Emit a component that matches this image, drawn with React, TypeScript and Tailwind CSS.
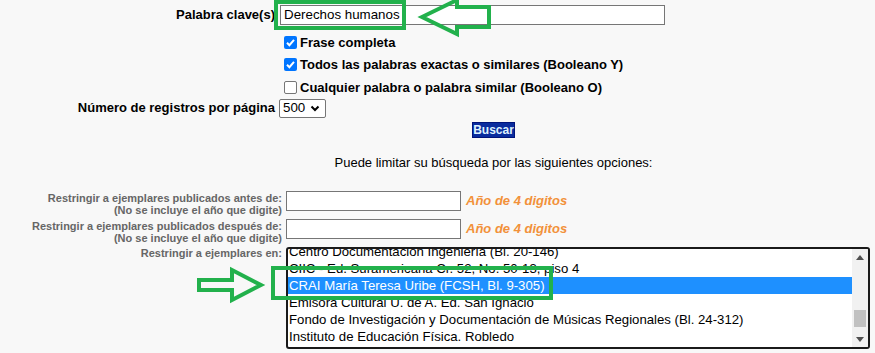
import React from "react";

function Check({ checked }: { checked: boolean }) {
  if (checked) {
    return (
      <span className="ml-[4px] mr-[3px] inline-flex h-[13px] w-[13px] items-center justify-center rounded-[2px] bg-[#0075ff]">
        <svg width="11" height="11" viewBox="0 0 11 11">
          <path d="M2 5.8 L4.4 8.2 L9 2.8" fill="none" stroke="#fff" strokeWidth="2" />
        </svg>
      </span>
    );
  }
  return (
    <span className="ml-[4px] mr-[3px] inline-block h-[13px] w-[13px] rounded-[2px] border border-[#767676] bg-white" />
  );
}

const items = [
  "Centro Documentación Ingeniería (Bl. 20-146)",
  "CIIC - Ed. Suramericana Cr. 52, No. 50-13, piso 4",
  "CRAI María Teresa Uribe (FCSH, Bl. 9-305)",
  "Emisora Cultural U. de A. Ed. San Ignacio",
  "Fondo de Investigación y Documentación de Músicas Regionales (Bl. 24-312)",
  "Instituto de Educación Física. Robledo",
  "Instituto de Estudios Regionales (Bl. 9-242) Lunes a viernes 8:00 a.m. - 5:00 p.m. Sábados 7:00 a.m. - 1:00 p.m.",
];

export default function App() {
  return (
    <div className="relative h-[353px] w-[875px] overflow-hidden bg-[#f8f8f8] font-['Liberation_Sans',Arial,sans-serif] text-black">
      <div className="pt-[5px]">
        {/* Palabra clave */}
        <div className="flex h-[20px] items-center">
          <div className="w-[276px] pr-[1px] text-right text-[13px] font-bold">Palabra clave(s)</div>
          <div className="ml-[4px] flex h-[20px] w-[385px] items-center border border-[#767676] bg-white px-[3px] text-[13.33px]">
            Derechos humanos
          </div>
        </div>
        <div className="mt-[6px] pl-[280px] text-[13px] font-bold">
          <div className="flex h-[22.5px] items-center">
            <Check checked />
            <span>Frase completa</span>
          </div>
          <div className="flex h-[22.5px] items-center">
            <Check checked />
            <span>Todos las palabras exactas o similares (Booleano Y)</span>
          </div>
          <div className="flex h-[22.5px] items-center">
            <Check checked={false} />
            <span>Cualquier palabra o palabra similar (Booleano O)</span>
          </div>
        </div>
        <div className="flex h-[19px] items-center">
          <div className="w-[275px] text-right text-[13px] font-bold">Número de registros por página</div>
          <div className="ml-[4px] flex h-[19px] w-[47px] items-center justify-between rounded-[2px] border border-[#767676] bg-white pl-[3px] pr-[5px] text-[13.33px]">
            <span>500</span>
            <svg width="10" height="7" viewBox="0 0 10 7">
              <path d="M1.5 1.5 L5 5 L8.5 1.5" fill="none" stroke="#000" strokeWidth="2" />
            </svg>
          </div>
        </div>
        <div className="mt-[4.5px] flex justify-center pl-[112px]">
          <div className="flex h-[16px] w-[43px] items-center justify-center border border-[#00137a] bg-[#0a2c9e] text-[12px] font-bold text-[#dff2ff]">
            Buscar
          </div>
        </div>
        <div className="mt-[17px] pl-[112px] text-center text-[13px] leading-[16px]">
          Puede limitar su búsqueda por las siguientes opciones:
        </div>

        {/* Restringir */}
        <div className="mt-[20px] flex h-[20px] items-start">
          <div className="w-[282px] pt-[1px] text-right text-[11px] font-bold leading-[12px] text-[#666]">
            <div>Restringir a ejemplares publicados antes de:</div>
            <div>(No se incluye el año que digite)</div>
          </div>
          <div className="ml-[4px] h-[20px] w-[175px] border border-[#767676] bg-white" />
          <div className="ml-[5px] flex h-[20px] items-center text-[13px] font-bold italic text-[#f2913a]">Año de 4 digitos</div>
        </div>
        <div className="mt-[8px] flex h-[20px] items-start">
          <div className="w-[282px] pt-[1px] text-right text-[11px] font-bold leading-[12px] text-[#666]">
            <div>Restringir a ejemplares publicados después de:</div>
            <div>(No se incluye el año que digite)</div>
          </div>
          <div className="ml-[4px] h-[20px] w-[175px] border border-[#767676] bg-white" />
          <div className="ml-[5px] flex h-[20px] items-center text-[13px] font-bold italic text-[#f2913a]">Año de 4 digitos</div>
        </div>
        <div className="mt-[8px] flex items-start">
          <div className="w-[282px] pt-[-1px] text-right text-[11px] font-bold leading-[12px] text-[#666]">
            Restringir a ejemplares en:
          </div>
          <div className="ml-[4px] flex h-[102px] w-[584px] overflow-hidden rounded-[3px] border-2 border-[#1a1a1a] bg-white">
            <div className="flex-1 overflow-hidden">
              <div className="mt-[-6px] text-[13.2px]">
                {items.map((t, i) => (
                  <div
                    key={i}
                    className={
                      "flex h-[17px] items-center whitespace-nowrap pl-[1px] " +
                      (i === 2 ? "bg-[#1e90ff] text-white" : "")
                    }
                  >
                    {t}
                  </div>
                ))}
              </div>
            </div>
            <div className="flex w-[16px] flex-col bg-[#f1f1f1]">
              <div className="flex h-[16px] items-center justify-center">
                <svg width="8" height="5" viewBox="0 0 8 5">
                  <path d="M0 5 L4 0 L8 5 Z" fill="#505050" />
                </svg>
              </div>
              <div className="flex-1">
                <div className="ml-[2px] mt-[45px] h-[17px] w-[12px] bg-[#c1c1c1]" />
              </div>
              <div className="flex h-[16px] items-center justify-center">
                <svg width="8" height="5" viewBox="0 0 8 5">
                  <path d="M0 0 L4 5 L8 0 Z" fill="#505050" />
                </svg>
              </div>
            </div>
          </div>
        </div>
      </div>

      {/* annotations */}
      <svg className="pointer-events-none absolute left-0 top-0" width="875" height="353" viewBox="0 0 875 353">
        <g fill="none" stroke="#22b14c" strokeWidth="4" strokeLinejoin="miter">
          <rect x="276" y="2" width="128" height="26" />
          <polygon points="422,17 457,0 457,7 489,7 489,27 457,27 457,34" />
          <rect x="273" y="268" width="278" height="30" />
          <polygon points="199,280 232,280 232,270 261,285 232,300 232,290 199,290" />
        </g>
      </svg>
    </div>
  );
}
